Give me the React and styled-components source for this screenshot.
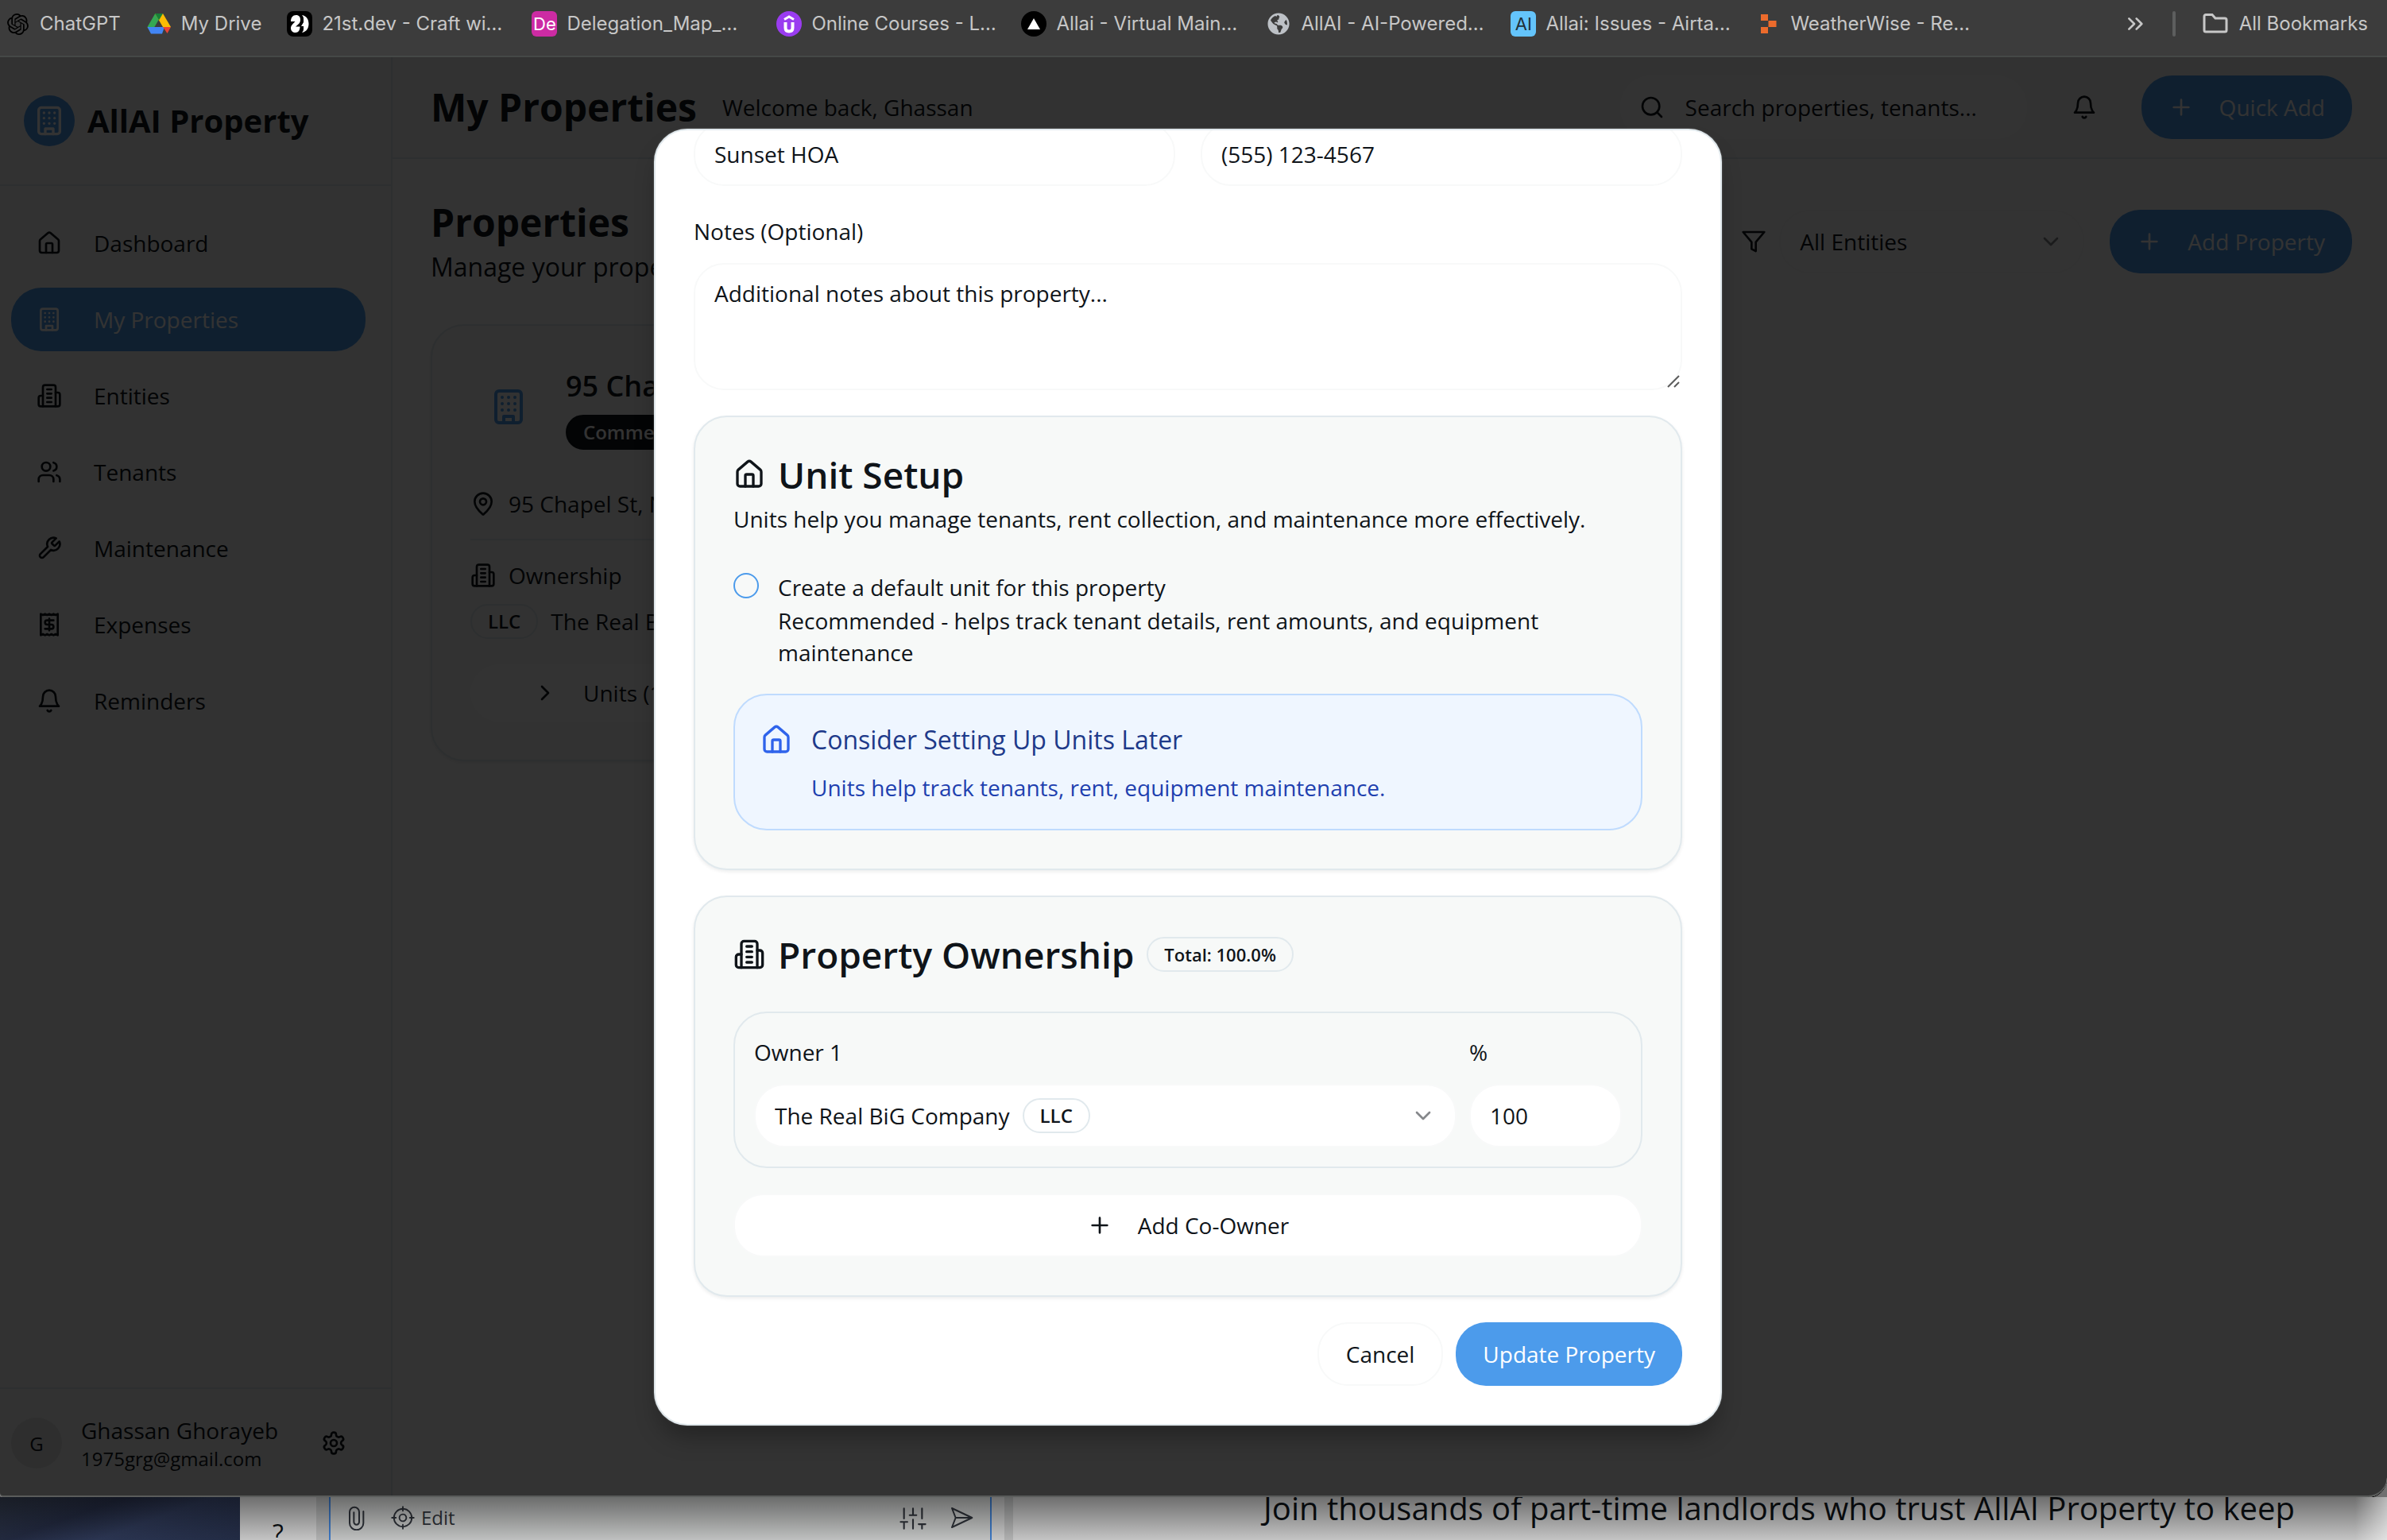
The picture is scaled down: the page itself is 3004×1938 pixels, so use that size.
import React from "react";
import styled, { createGlobalStyle, css } from "styled-components";
import { SiOpenai } from "react-icons/si";
import { FaGlobeAmericas } from "react-icons/fa";

const color = {
  text: "#0f1419",
  primary: "#4c9beb",
  card: "#f7f9f8",
  border: "#e1e9ed",
  input: "#f8f9f9",
  white: "#ffffff",
};

const medium = css`
  font-family: "Open Sans Medium", "Open Sans", "Noto Sans", sans-serif;
  font-weight: 500;
`;

const GlobalStyle = createGlobalStyle`
  *, *::before, *::after { box-sizing: border-box; }
  body { margin: 0; font-family: "Open Sans", "Noto Sans", sans-serif; color: ${color.text}; }
  h1, h2, h3, p { margin: 0; }
  button, input, select, textarea { font: inherit; color: inherit; margin: 0; }
  a { color: inherit; text-decoration: none; }
`;

/* ---------- icons ---------- */

const StrokeIcon = styled.svg`
  width: ${(p) => p.$size}px;
  height: ${(p) => p.$size}px;
  flex: none;
  fill: none;
  stroke: currentColor;
  stroke-width: ${(p) => p.$weight || 2};
  stroke-linecap: round;
  stroke-linejoin: round;
`;

const Icon = ({ size = 32, weight, children }) => (
  <StrokeIcon viewBox="0 0 24 24" $size={size} $weight={weight} aria-hidden="true">
    {children}
  </StrokeIcon>
);

const House = (p) => (
  <Icon {...p}>
    <path d="M15 21v-8a1 1 0 0 0-1-1h-4a1 1 0 0 0-1 1v8" />
    <path d="M3 10a2 2 0 0 1 .709-1.528l7-5.999a2 2 0 0 1 2.582 0l7 5.999A2 2 0 0 1 21 10v9a2 2 0 0 1-2 2H5a2 2 0 0 1-2-2z" />
  </Icon>
);
const Building = (p) => (
  <Icon {...p}>
    <rect width="16" height="20" x="4" y="2" rx="2" />
    <path d="M9 22v-4h6v4M8 6h.01M16 6h.01M12 6h.01M12 10h.01M12 14h.01M16 10h.01M16 14h.01M8 10h.01M8 14h.01" />
  </Icon>
);
const Offices = (p) => (
  <Icon {...p}>
    <path d="M6 22V4a2 2 0 0 1 2-2h8a2 2 0 0 1 2 2v18Z" />
    <path d="M6 12H4a2 2 0 0 0-2 2v6a2 2 0 0 0 2 2h2M18 9h2a2 2 0 0 1 2 2v9a2 2 0 0 1-2 2h-2" />
    <path d="M10 6h4M10 10h4M10 14h4M10 18h4" />
  </Icon>
);
const Users = (p) => (
  <Icon {...p}>
    <path d="M16 21v-2a4 4 0 0 0-4-4H6a4 4 0 0 0-4 4v2" />
    <circle cx="9" cy="7" r="4" />
    <path d="M22 21v-2a4 4 0 0 0-3-3.87M16 3.13a4 4 0 0 1 0 7.75" />
  </Icon>
);
const Wrench = (p) => (
  <Icon {...p}>
    <path d="M14.7 6.3a1 1 0 0 0 0 1.4l1.6 1.6a1 1 0 0 0 1.4 0l3.77-3.77a6 6 0 0 1-7.94 7.94l-6.91 6.91a2.12 2.12 0 0 1-3-3l6.91-6.91a6 6 0 0 1 7.94-7.94l-3.76 3.76z" />
  </Icon>
);
const Receipt = (p) => (
  <Icon {...p}>
    <path d="M4 2v20l2-1 2 1 2-1 2 1 2-1 2 1 2-1 2 1V2l-2 1-2-1-2 1-2-1-2 1-2-1-2 1Z" />
    <path d="M16 8h-6a2 2 0 1 0 0 4h4a2 2 0 1 1 0 4H8M12 17.5v-11" />
  </Icon>
);
const Bell = (p) => (
  <Icon {...p}>
    <path d="M6 8a6 6 0 0 1 12 0c0 7 3 9 3 9H3s3-2 3-9" />
    <path d="M10.3 21a1.94 1.94 0 0 0 3.4 0" />
  </Icon>
);
const Search = (p) => (
  <Icon {...p}>
    <circle cx="11" cy="11" r="8" />
    <path d="m21 21-4.3-4.3" />
  </Icon>
);
const Plus = (p) => (
  <Icon {...p}>
    <path d="M5 12h14M12 5v14" />
  </Icon>
);
const Filter = (p) => (
  <Icon {...p}>
    <path d="M22 3H2l8 9.46V19l4 2v-8.54L22 3z" />
  </Icon>
);
const ChevronDown = (p) => (
  <Icon {...p}>
    <path d="m6 9 6 6 6-6" />
  </Icon>
);
const ChevronRight = (p) => (
  <Icon {...p}>
    <path d="m9 18 6-6-6-6" />
  </Icon>
);
const Pin = (p) => (
  <Icon {...p}>
    <path d="M20 10c0 4.993-5.539 10.193-7.399 11.799a1 1 0 0 1-1.202 0C9.539 20.193 4 14.993 4 10a8 8 0 0 1 16 0" />
    <circle cx="12" cy="10" r="3" />
  </Icon>
);
const Gear = (p) => (
  <Icon {...p}>
    <path d="M12.22 2h-.44a2 2 0 0 0-2 2v.18a2 2 0 0 1-1 1.73l-.43.25a2 2 0 0 1-2 0l-.15-.08a2 2 0 0 0-2.73.73l-.22.38a2 2 0 0 0 .73 2.73l.15.1a2 2 0 0 1 1 1.72v.51a2 2 0 0 1-1 1.74l-.15.09a2 2 0 0 0-.73 2.73l.22.38a2 2 0 0 0 2.73.73l.15-.08a2 2 0 0 1 2 0l.43.25a2 2 0 0 1 1 1.73V20a2 2 0 0 0 2 2h.44a2 2 0 0 0 2-2v-.18a2 2 0 0 1 1-1.73l.43-.25a2 2 0 0 1 2 0l.15.08a2 2 0 0 0 2.73-.73l.22-.39a2 2 0 0 0-.73-2.73l-.15-.08a2 2 0 0 1-1-1.74v-.5a2 2 0 0 1 1-1.74l.15-.09a2 2 0 0 0 .73-2.73l-.22-.38a2 2 0 0 0-2.73-.73l-.15.08a2 2 0 0 1-2 0l-.43-.25a2 2 0 0 1-1-1.73V4a2 2 0 0 0-2-2z" />
    <circle cx="12" cy="12" r="3" />
  </Icon>
);

/* ---------- shell ---------- */

const Screen = styled.div`
  display: flex;
  flex-direction: column;
  height: 100vh;
  overflow: hidden;
  background: #707070;
`;

const BookmarkBar = styled.nav`
  display: flex;
  align-items: center;
  gap: 32px;
  height: 72px;
  flex: none;
  padding: 0 24px 10px 6px;
  background: #3c3c3c;
  border-bottom: 2px solid #454847;
  color: #c7c7c7;
  font: 400 24px/32px Inter, Roboto, sans-serif;
  white-space: nowrap;
`;

const Bookmark = styled.a`
  display: flex;
  align-items: center;
  gap: 12px;
  flex: none;
  width: ${(p) => (p.$fixed ? "276px" : "auto")};
  svg { flex: none; }
`;

const Favicon = styled.span`
  display: flex;
  align-items: center;
  justify-content: center;
  width: 32px;
  height: 32px;
  flex: none;
  border-radius: ${(p) => p.$radius || 0}px;
  background: ${(p) => p.$bg || "transparent"};
  color: ${(p) => p.$fg || "#000"};
  font-size: 22px;
  overflow: hidden;
`;

const BarEnd = styled.div`
  display: flex;
  align-items: center;
  gap: 32px;
  margin-left: auto;
`;

const BarDivider = styled.span`
  width: 4px;
  height: 32px;
  border-radius: 2px;
  background: #5d5e5e;
`;

const BarButton = styled.button`
  display: flex;
  align-items: center;
  gap: 12px;
  padding: 0;
  border: 0;
  background: none;
`;

const Window = styled.div`
  position: relative;
  display: flex;
  flex: 1;
  min-height: 0;
  overflow: hidden;
  background: ${color.white};
  border-radius: 0 0 24px 4px;
  box-shadow: 0 1px 0 #000;
`;

/* ---------- sidebar ---------- */

const Sidebar = styled.aside`
  display: flex;
  flex-direction: column;
  width: 494px;
  flex: none;
  background: ${color.card};
  border-right: 2px solid ${color.border};
`;

const Brand = styled.div`
  display: flex;
  align-items: center;
  gap: 16px;
  height: 162px;
  padding: 0 30px;
  border-bottom: 2px solid ${color.border};
  font-size: 40px;
  line-height: 56px;
  font-weight: 700;
`;

const BrandMark = styled.span`
  display: flex;
  align-items: center;
  justify-content: center;
  width: 64px;
  height: 64px;
  border-radius: 50%;
  background: ${color.primary};
  color: ${color.white};
`;

const Menu = styled.nav`
  display: flex;
  flex-direction: column;
  gap: 16px;
  flex: 1;
  padding: 32px 32px 32px 14px;
`;

const MenuLink = styled.a`
  display: flex;
  align-items: center;
  gap: 40px;
  height: 80px;
  padding: 0 32px;
  border-radius: 38px;
  font-size: 28px;
  ${medium}
  ${(p) =>
    p.$active &&
    css`
      background: ${color.primary};
      color: ${color.white};
    `}
`;

const Account = styled.div`
  display: flex;
  align-items: center;
  gap: 24px;
  padding: 32px 32px 32px 14px;
  border-top: 2px solid ${color.border};
`;

const Avatar = styled.span`
  display: flex;
  align-items: center;
  justify-content: center;
  width: 64px;
  height: 64px;
  border-radius: 50%;
  background: #e5e5e6;
  font-size: 24px;
  ${medium}
`;

const AccountText = styled.div`
  flex: 1;
  white-space: nowrap;
`;

const AccountName = styled.p`
  font-size: 28px;
  line-height: 40px;
  ${medium}
`;

const AccountMail = styled.p`
  font-size: 24px;
  line-height: 32px;
`;

const IconButton = styled.button`
  display: flex;
  align-items: center;
  justify-content: center;
  width: 80px;
  height: 72px;
  padding: 0;
  border: 0;
  background: none;
`;

/* ---------- main page ---------- */

const Main = styled.main`
  display: flex;
  flex-direction: column;
  flex: 1;
  min-width: 0;
`;

const TopBar = styled.header`
  display: flex;
  align-items: center;
  gap: 32px;
  height: 128px;
  padding: 0 44px 0 48px;
  background: ${color.card};
  border-bottom: 2px solid ${color.border};
`;

const Heading = styled.h1`
  font-size: 48px;
  line-height: 64px;
  font-weight: 700;
`;

const Body = styled.p`
  font-size: ${(p) => (p.$large ? 32 : 28)}px;
  line-height: ${(p) => (p.$large ? 48 : 40)}px;
`;

const SearchBox = styled.label`
  display: flex;
  align-items: center;
  gap: 26px;
  width: 512px;
  height: 80px;
  margin-left: auto;
  padding: 0 24px;
  border-radius: 38px;
  background: ${color.white};
  font-size: 28px;
`;

const SearchInput = styled.input`
  flex: 1;
  min-width: 0;
  padding: 0;
  border: 0;
  background: none;
  outline: 0;
  &::placeholder { color: ${color.text}; opacity: 1; }
`;

const Button = styled.button`
  display: flex;
  align-items: center;
  justify-content: center;
  gap: 32px;
  height: 80px;
  padding: 0 34px;
  border: 0;
  border-radius: 38px;
  font-size: 28px;
  line-height: 40px;
  ${medium}
  white-space: nowrap;
  ${(p) =>
    p.$outline
      ? css`
          background: ${color.white};
          border: 2px solid ${color.input};
        `
      : css`
          background: ${color.primary};
          color: ${color.white};
        `}
`;

const Content = styled.div`
  display: flex;
  flex-direction: column;
  gap: 48px;
  padding: 48px 44px 48px 48px;
`;

const TitleRow = styled.div`
  display: flex;
  align-items: center;
  justify-content: space-between;
`;

const Actions = styled.div`
  display: flex;
  align-items: center;
  gap: ${(p) => p.$gap}px;
`;

const Picker = styled.div`
  display: flex;
  align-items: center;
  gap: 16px;
  width: ${(p) => p.$width || "auto"};
  height: 80px;
  padding: 0 24px;
  border: 2px solid ${color.input};
  border-radius: 38px;
  background: ${color.white};
  font-size: 28px;
`;

const PickerSelect = styled.select`
  appearance: none;
  field-sizing: content;
  padding: 0;
  border: 0;
  background: none;
  outline: 0;
`;

const PickerArrow = styled.span`
  display: flex;
  margin-left: auto;
  opacity: 0.5;
`;

const CardGrid = styled.div`
  display: grid;
  grid-template-columns: repeat(3, 1fr);
  gap: 48px;
`;

const Card = styled.section`
  padding: 48px;
  border: 2px solid ${color.border};
  border-radius: 42px;
  background: ${color.card};
  box-shadow: 0 2px 4px rgba(15, 20, 25, 0.08);
`;

const PropertyHead = styled.div`
  display: flex;
  align-items: center;
  gap: 24px;
  margin-bottom: 48px;
`;

const PropertyMark = styled.span`
  display: flex;
  padding: 24px;
  color: ${color.primary};
`;

const PropertyName = styled.h3`
  margin-bottom: 8px;
  font-size: 36px;
  line-height: 56px;
  font-weight: 600;
`;

const Badge = styled.span`
  display: inline-flex;
  align-items: center;
  height: 44px;
  padding: 0 20px;
  border: 2px solid ${(p) => (p.$dark ? color.text : color.border)};
  border-radius: 22px;
  background: ${(p) => (p.$dark ? color.text : "transparent")};
  color: ${(p) => (p.$dark ? color.white : color.text)};
  font-size: ${(p) => (p.$compact ? 22 : 24)}px;
  line-height: 32px;
  font-weight: 600;
`;

const Line = styled.div`
  display: flex;
  align-items: center;
  gap: 16px;
  font-size: 28px;
  line-height: 40px;
  ${(p) => p.$strong && medium}
`;

const OwnerSummary = styled.div`
  display: flex;
  flex-direction: column;
  gap: 16px;
  margin: 24px 0 32px;
  padding-top: 24px;
  border-top: 2px solid ${color.border};
`;

const UnitsToggle = styled.button`
  display: flex;
  align-items: center;
  gap: 32px;
  width: 100%;
  height: 72px;
  padding: 0 76px;
  border: 2px solid ${color.white};
  border-radius: 36px;
  background: ${color.white};
  font-size: 28px;
  ${medium}
`;

/* ---------- dialog ---------- */

const Overlay = styled.div`
  position: absolute;
  inset: 0;
  display: flex;
  align-items: center;
  justify-content: center;
  padding-right: 14px;
  background: rgba(0, 0, 0, 0.8);
  border-radius: 0 0 24px 4px;
  box-shadow: inset 0 -2px 0 #5a5c5b;
`;

const Dialog = styled.form`
  display: flex;
  flex-direction: column;
  justify-content: flex-end;
  gap: 32px;
  width: 100%;
  max-width: 1344px;
  height: calc(90% + 2px);
  padding: 48px;
  overflow: hidden;
  border: 2px solid ${color.border};
  border-radius: 42px;
  background: ${color.white};
  box-shadow: 0 20px 30px -6px rgba(0, 0, 0, 0.3), 0 0 2px rgba(255, 255, 255, 0.4);
  > * { flex: none; }
`;

const TwoColumns = styled.div`
  display: grid;
  grid-template-columns: 1fr 1fr;
  gap: 32px;
`;

const TextInput = styled.input`
  width: 100%;
  height: 80px;
  padding: 0 24px;
  border: 2px solid ${color.input};
  border-radius: 38px;
  background: ${color.white};
  font-size: 28px;
  outline: 0;
  &::placeholder { color: ${color.text}; opacity: 1; }
`;

const Field = styled.div`
  position: relative;
  flex: ${(p) => p.$flex || "none"};
  font-size: 32px;
  line-height: 48px;
`;

const Label = styled.label`
  font-size: 28px;
  ${medium}
`;

const TextArea = styled.textarea`
  display: block;
  width: 100%;
  height: 160px;
  margin-top: 16px;
  padding: 16px 24px;
  border: 2px solid ${color.input};
  border-radius: 38px;
  background: ${color.white};
  font-size: 28px;
  line-height: 40px;
  resize: none;
  outline: 0;
  &::placeholder { color: ${color.text}; opacity: 1; }
`;

const Grip = styled.svg`
  position: absolute;
  right: 3px;
  bottom: 3px;
  width: 16px;
  height: 16px;
  stroke: #5c5c5c;
  stroke-width: 2;
`;

const CardTitle = styled.h2`
  display: flex;
  align-items: center;
  gap: 16px;
  font-size: 46px;
  line-height: 48px;
  font-weight: 600;
`;

const CardHead = styled.div`
  display: flex;
  flex-direction: column;
  gap: 12px;
  margin-bottom: 48px;
`;

const Option = styled.div`
  display: flex;
  align-items: flex-start;
  gap: 24px;
  margin-bottom: 32px;
  font-size: 28px;
  line-height: 40px;
`;

const RoundCheck = styled.input`
  appearance: none;
  width: 32px;
  height: 32px;
  flex: none;
  border: 2px solid ${color.primary};
  border-radius: 50%;
`;

const OptionLabel = styled.label`
  display: block;
  margin-bottom: 4px;
  line-height: 36px;
  ${medium}
`;

const Notice = styled.div`
  display: flex;
  align-items: flex-start;
  gap: 24px;
  padding: 32px;
  border: 2px solid #bfdbfe;
  border-radius: 42px;
  background: #eff6ff;
  color: #1e40af;
`;

const NoticeIcon = styled.span`
  display: flex;
  padding-top: 4px;
  color: #2f63eb;
`;

const NoticeTitle = styled.h3`
  margin-bottom: 16px;
  font-size: 32px;
  line-height: 48px;
  ${medium}
  color: #1e3a8a;
`;

const OwnerRow = styled.div`
  display: flex;
  gap: 16px;
  margin-bottom: 32px;
  padding: 24px;
  border: 2px solid ${color.border};
  border-radius: 42px;
`;

const FieldControl = styled.div`
  width: ${(p) => p.$width || "auto"};
  padding-top: 16px;
`;

const WideButton = styled(Button)`
  width: 100%;
`;

const Footer = styled.div`
  display: flex;
  justify-content: flex-end;
  gap: 16px;
`;

/* ---------- windows behind ---------- */

const Backdrop = styled.div`
  position: relative;
  display: flex;
  height: 54px;
  flex: none;
  overflow: hidden;
  background: #ffffff;
`;

const Shade = styled.div`
  position: absolute;
  inset: 0;
  background:
    linear-gradient(to left, rgba(255, 255, 255, 0.5), transparent 40px),
    linear-gradient(rgba(0, 0, 0, 0.57), rgba(0, 0, 0, 0.23));
`;

const Photo = styled.div`
  width: 302px;
  background: linear-gradient(160deg, #3a4458 0%, #2b3450 35%, #38456a 60%, #2c3858 100%);
`;

const HelpRail = styled.div`
  width: 96px;
  padding-top: 24px;
  text-align: center;
  font-size: 32px;
  line-height: 44px;
`;

const Gutter = styled.div`
  width: ${(p) => p.$width}px;
  margin-left: ${(p) => p.$offset || 0}px;
  background: #e4e5e5;
`;

const Composer = styled.div`
  display: flex;
  align-items: flex-start;
  gap: 28px;
  width: 834px;
  padding: 10px 20px 10px 16px;
  border: solid #4d9bff;
  border-width: 0 2px;
  background: #f8faf9;
  color: #3a3f48;
  font-size: 24px;
  line-height: 32px;
`;

const ComposerMode = styled.span`
  display: flex;
  align-items: center;
  gap: 8px;
  margin-right: auto;
`;

const Pitch = styled.p`
  flex: 1;
  padding: 0 20px 0 219px;
  margin-top: -14px;
  font-size: 40px;
  line-height: 56px;
  text-align: center;
`;

const MENU = [
  ["Dashboard", House],
  ["My Properties", Building, true],
  ["Entities", Offices],
  ["Tenants", Users],
  ["Maintenance", Wrench],
  ["Expenses", Receipt],
  ["Reminders", Bell],
];

const BOOKMARKS = [
  {
    name: "ChatGPT",
    icon: (
      <Favicon>
        <SiOpenai size={27} />
      </Favicon>
    ),
  },
  {
    name: "My Drive",
    icon: (
      <svg width="32" height="32" viewBox="0 0 32 32" aria-hidden="true">
        <path d="M11 3.5 1.5 20l4.5 7.500L16.500 9.500z" fill="#34a853" />
        <path d="M11 3h10l10 17H21z" fill="#fbbc04" />
        <path d="M11 3h10l-5 8.500z" fill="#188038" />
        <path d="M1.500 20H23l-3 8.500H6z" fill="#4285f4" />
        <path d="M21 20h10l-4.500 8z" fill="#ea4335" />
      </svg>
    ),
  },
  {
    name: "21st.dev - Craft wi…",
    icon: (
      <Favicon $bg="#000" $radius={8}>
        <svg width="24" height="24" viewBox="0 0 24 24" fill="#fff" aria-hidden="true">
          <path d="M1 9C1 4 3.500 1 7.500 1S13 3.500 13 7c0 4-2.500 5.500-6 8.500h5.500C12.500 20 10.500 23 7 23s-6-2-6-5.500C1 14 4 12 6.500 9z" />
          <path d="M15 1c6 1 8.500 6 8.500 11S21 22 15 23c1.500-1.500 2-3 2-5v-3h-3l3-5V6c0-2-.5-3.500-2-5z" />
        </svg>
      </Favicon>
    ),
  },
  { name: "Delegation_Map_…", icon: <Favicon $bg="#cc2ba3" $fg="#fff" $radius={6}>De</Favicon> },
  {
    name: "Online Courses - L…",
    icon: (
      <Favicon $bg="#9a3cf0" $radius={16}>
        <svg width="24" height="26" viewBox="0 0 24 26" fill="none" stroke="#fff" strokeWidth="4" aria-hidden="true">
          <path d="m6 7.500 6-3.500 6 3.500" strokeWidth="3" />
          <path d="M7.500 11v7c0 3 1.500 4.500 4.500 4.500s4.500-1.500 4.500-4.500v-7" />
        </svg>
      </Favicon>
    ),
  },
  {
    name: "Allai - Virtual Main…",
    icon: (
      <Favicon $bg="#000" $radius={16}>
        <svg width="16" height="14" viewBox="0 0 16 14" fill="#fff" aria-hidden="true">
          <path d="m8 0 8 14H0z" />
        </svg>
      </Favicon>
    ),
  },
  {
    name: "AllAI - AI-Powered…",
    icon: (
      <Favicon $fg="#bdc1c6">
        <FaGlobeAmericas size={28} />
      </Favicon>
    ),
  },
  { name: "Allai: Issues - Airta…", icon: <Favicon $bg="#64c4fb" $fg="#1f3038" $radius={6}>AI</Favicon> },
  {
    name: "WeatherWise - Re…",
    icon: (
      <svg width="32" height="32" viewBox="0 0 32 32" fill="#ec6b2c" aria-hidden="true">
        <path d="M7 4h9v8H7zM16.500 12h10v8h-10zM7 20h9v8H7z" />
      </svg>
    ),
  },
];

const OwnerPicker = () => (
  <Picker>
    <PickerSelect id="owner-1" defaultValue="big">
      <option value="big">The Real BiG Company</option>
    </PickerSelect>
    <Badge>LLC</Badge>
    <PickerArrow>
      <ChevronDown />
    </PickerArrow>
  </Picker>
);

const EditDialog = () => (
  <Dialog role="dialog" aria-label="Edit property" onSubmit={(e) => e.preventDefault()}>
    <TwoColumns>
      <TextInput aria-label="HOA name" placeholder="Sunset HOA" />
      <TextInput aria-label="HOA phone" placeholder="(555) 123-4567" />
    </TwoColumns>

    <Field>
      <Label htmlFor="notes">Notes (Optional)</Label>
      <TextArea id="notes" placeholder="Additional notes about this property..." />
      <Grip viewBox="0 0 16 16" aria-hidden="true">
        <path d="M1 15 15 1M9 15l6-6" />
      </Grip>
    </Field>

    <Card>
      <CardHead>
        <CardTitle>
          <House size={40} />
          Unit Setup
        </CardTitle>
        <Body>Units help you manage tenants, rent collection, and maintenance more effectively.</Body>
      </CardHead>
      <Option>
        <RoundCheck type="checkbox" id="default-unit" />
        <div>
          <OptionLabel htmlFor="default-unit">Create a default unit for this property</OptionLabel>
          <Body>Recommended - helps track tenant details, rent amounts, and equipment maintenance</Body>
        </div>
      </Option>
      <Notice>
        <NoticeIcon>
          <House size={40} />
        </NoticeIcon>
        <div>
          <NoticeTitle>Consider Setting Up Units Later</NoticeTitle>
          <Body>Units help track tenants, rent, equipment maintenance.</Body>
        </div>
      </Notice>
    </Card>

    <Card>
      <CardHead>
        <CardTitle>
          <Offices size={40} />
          Property Ownership
          <Badge $compact>Total: 100.0%</Badge>
        </CardTitle>
      </CardHead>
      <OwnerRow>
        <Field $flex="1">
          <Label htmlFor="owner-1">Owner 1</Label>
          <FieldControl>
            <OwnerPicker />
          </FieldControl>
        </Field>
        <Field>
          <Label htmlFor="share-1">%</Label>
          <FieldControl $width="192px">
            <TextInput id="share-1" defaultValue="100" />
          </FieldControl>
        </Field>
      </OwnerRow>
      <WideButton type="button" $outline>
        <Plus />
        Add Co-Owner
      </WideButton>
    </Card>

    <Footer>
      <Button type="button" $outline>Cancel</Button>
      <Button type="submit">Update Property</Button>
    </Footer>
  </Dialog>
);

export default function App() {
  return (
    <Screen>
      <GlobalStyle />
      <BookmarkBar>
        {BOOKMARKS.map((b, i) => (
          <Bookmark key={b.name} href="#" $fixed={i > 1}>
            {b.icon}
            {b.name}
          </Bookmark>
        ))}
        <BarEnd>
          <BarButton aria-label="More bookmarks">
            <Icon size={32} weight={2}>
              <path d="m7 17 5-5-5-5M14 17l5-5-5-5" />
            </Icon>
          </BarButton>
          <BarDivider />
          <BarButton>
            <svg width="36" height="32" viewBox="0 0 36 32" fill="none" stroke="#c7c7c7" strokeWidth="3" aria-hidden="true">
              <path d="M4 24V6.500A2 2 0 0 1 6 4.500h8l4 4.500h12a2 2 0 0 1 2 2V24a2 2 0 0 1-2 2H6a2 2 0 0 1-2-2z" />
            </svg>
            All Bookmarks
          </BarButton>
        </BarEnd>
      </BookmarkBar>

      <Window>
        <Sidebar>
          <Brand>
            <BrandMark>
              <Building size={40} weight={2} />
            </BrandMark>
            AllAI Property
          </Brand>
          <Menu>
            {MENU.map(([name, Glyph, active]) => (
              <MenuLink key={name} href="#" $active={active}>
                <Glyph />
                {name}
              </MenuLink>
            ))}
          </Menu>
          <Account>
            <Avatar>G</Avatar>
            <AccountText>
              <AccountName>Ghassan Ghorayeb</AccountName>
              <AccountMail>1975grg@gmail.com</AccountMail>
            </AccountText>
            <IconButton aria-label="Settings">
              <Gear />
            </IconButton>
          </Account>
        </Sidebar>

        <Main>
          <TopBar>
            <Heading>My Properties</Heading>
            <Body>Welcome back, Ghassan</Body>
            <SearchBox>
              <Search />
              <SearchInput aria-label="Search" placeholder="Search properties, tenants..." />
            </SearchBox>
            <IconButton aria-label="Notifications">
              <Bell />
            </IconButton>
            <Button>
              <Plus />
              Quick Add
            </Button>
          </TopBar>
          <Content>
            <TitleRow>
              <div>
                <Heading as="h2">Properties</Heading>
                <Body $large>Manage your property portfolio</Body>
              </div>
              <Actions $gap={32}>
                <Actions $gap={16}>
                  <Filter />
                  <Picker $width="384px">
                    <PickerSelect aria-label="Entity" defaultValue="all">
                      <option value="all">All Entities</option>
                    </PickerSelect>
                    <PickerArrow>
                      <ChevronDown />
                    </PickerArrow>
                  </Picker>
                </Actions>
                <Button>
                  <Plus />
                  Add Property
                </Button>
              </Actions>
            </TitleRow>
            <CardGrid>
              <Card>
                <PropertyHead>
                  <PropertyMark>
                    <Building size={48} />
                  </PropertyMark>
                  <div>
                    <PropertyName>95 Chapel St</PropertyName>
                    <Badge $dark>Commercial</Badge>
                  </div>
                </PropertyHead>
                <Line>
                  <Pin />
                  95 Chapel St, Newton
                </Line>
                <OwnerSummary>
                  <Line $strong>
                    <Offices />
                    Ownership
                  </Line>
                  <Line>
                    <Badge>LLC</Badge>
                    The Real BiG Company
                  </Line>
                </OwnerSummary>
                <UnitsToggle>
                  <ChevronRight />
                  Units (1)
                </UnitsToggle>
              </Card>
            </CardGrid>
          </Content>
        </Main>

        <Overlay>
          <EditDialog />
        </Overlay>
      </Window>

      <Backdrop>
        <Photo />
        <HelpRail>?</HelpRail>
        <Gutter $width={16} />
        <Composer>
          <Icon size={32} weight={1.5}>
            <path d="M19 6v11a6.500 6.500 0 0 1-13 0V6.500a4.500 4.500 0 0 1 9 0V16a2.500 2.500 0 0 1-5 0V7" />
          </Icon>
          <ComposerMode>
            <Icon size={30} weight={1.5}>
              <circle cx="12" cy="12" r="9" />
              <circle cx="12" cy="12" r="3.500" />
              <path d="M12 1v4M12 19v4M1 12h4M19 12h4" />
            </Icon>
            Edit
          </ComposerMode>
          <Icon size={34} weight={1.5}>
            <path d="M4 3v9M1 15h6M4 15v6M12 3v5M9 9h6M12 13v8M20 3v9M17 17h6M20 17v4" />
          </Icon>
          <Icon size={32} weight={1.5}>
            <path d="M3 3l19 9-19 9 3.500-9zM6.500 12H22" />
          </Icon>
        </Composer>
        <Gutter $width={11} $offset={16} />
        <Pitch>
          Join thousands of part-time landlords who trust AllAI Property to keep
          <br />
          everything organized and profitable.
        </Pitch>
        <Shade />
      </Backdrop>
    </Screen>
  );
}
